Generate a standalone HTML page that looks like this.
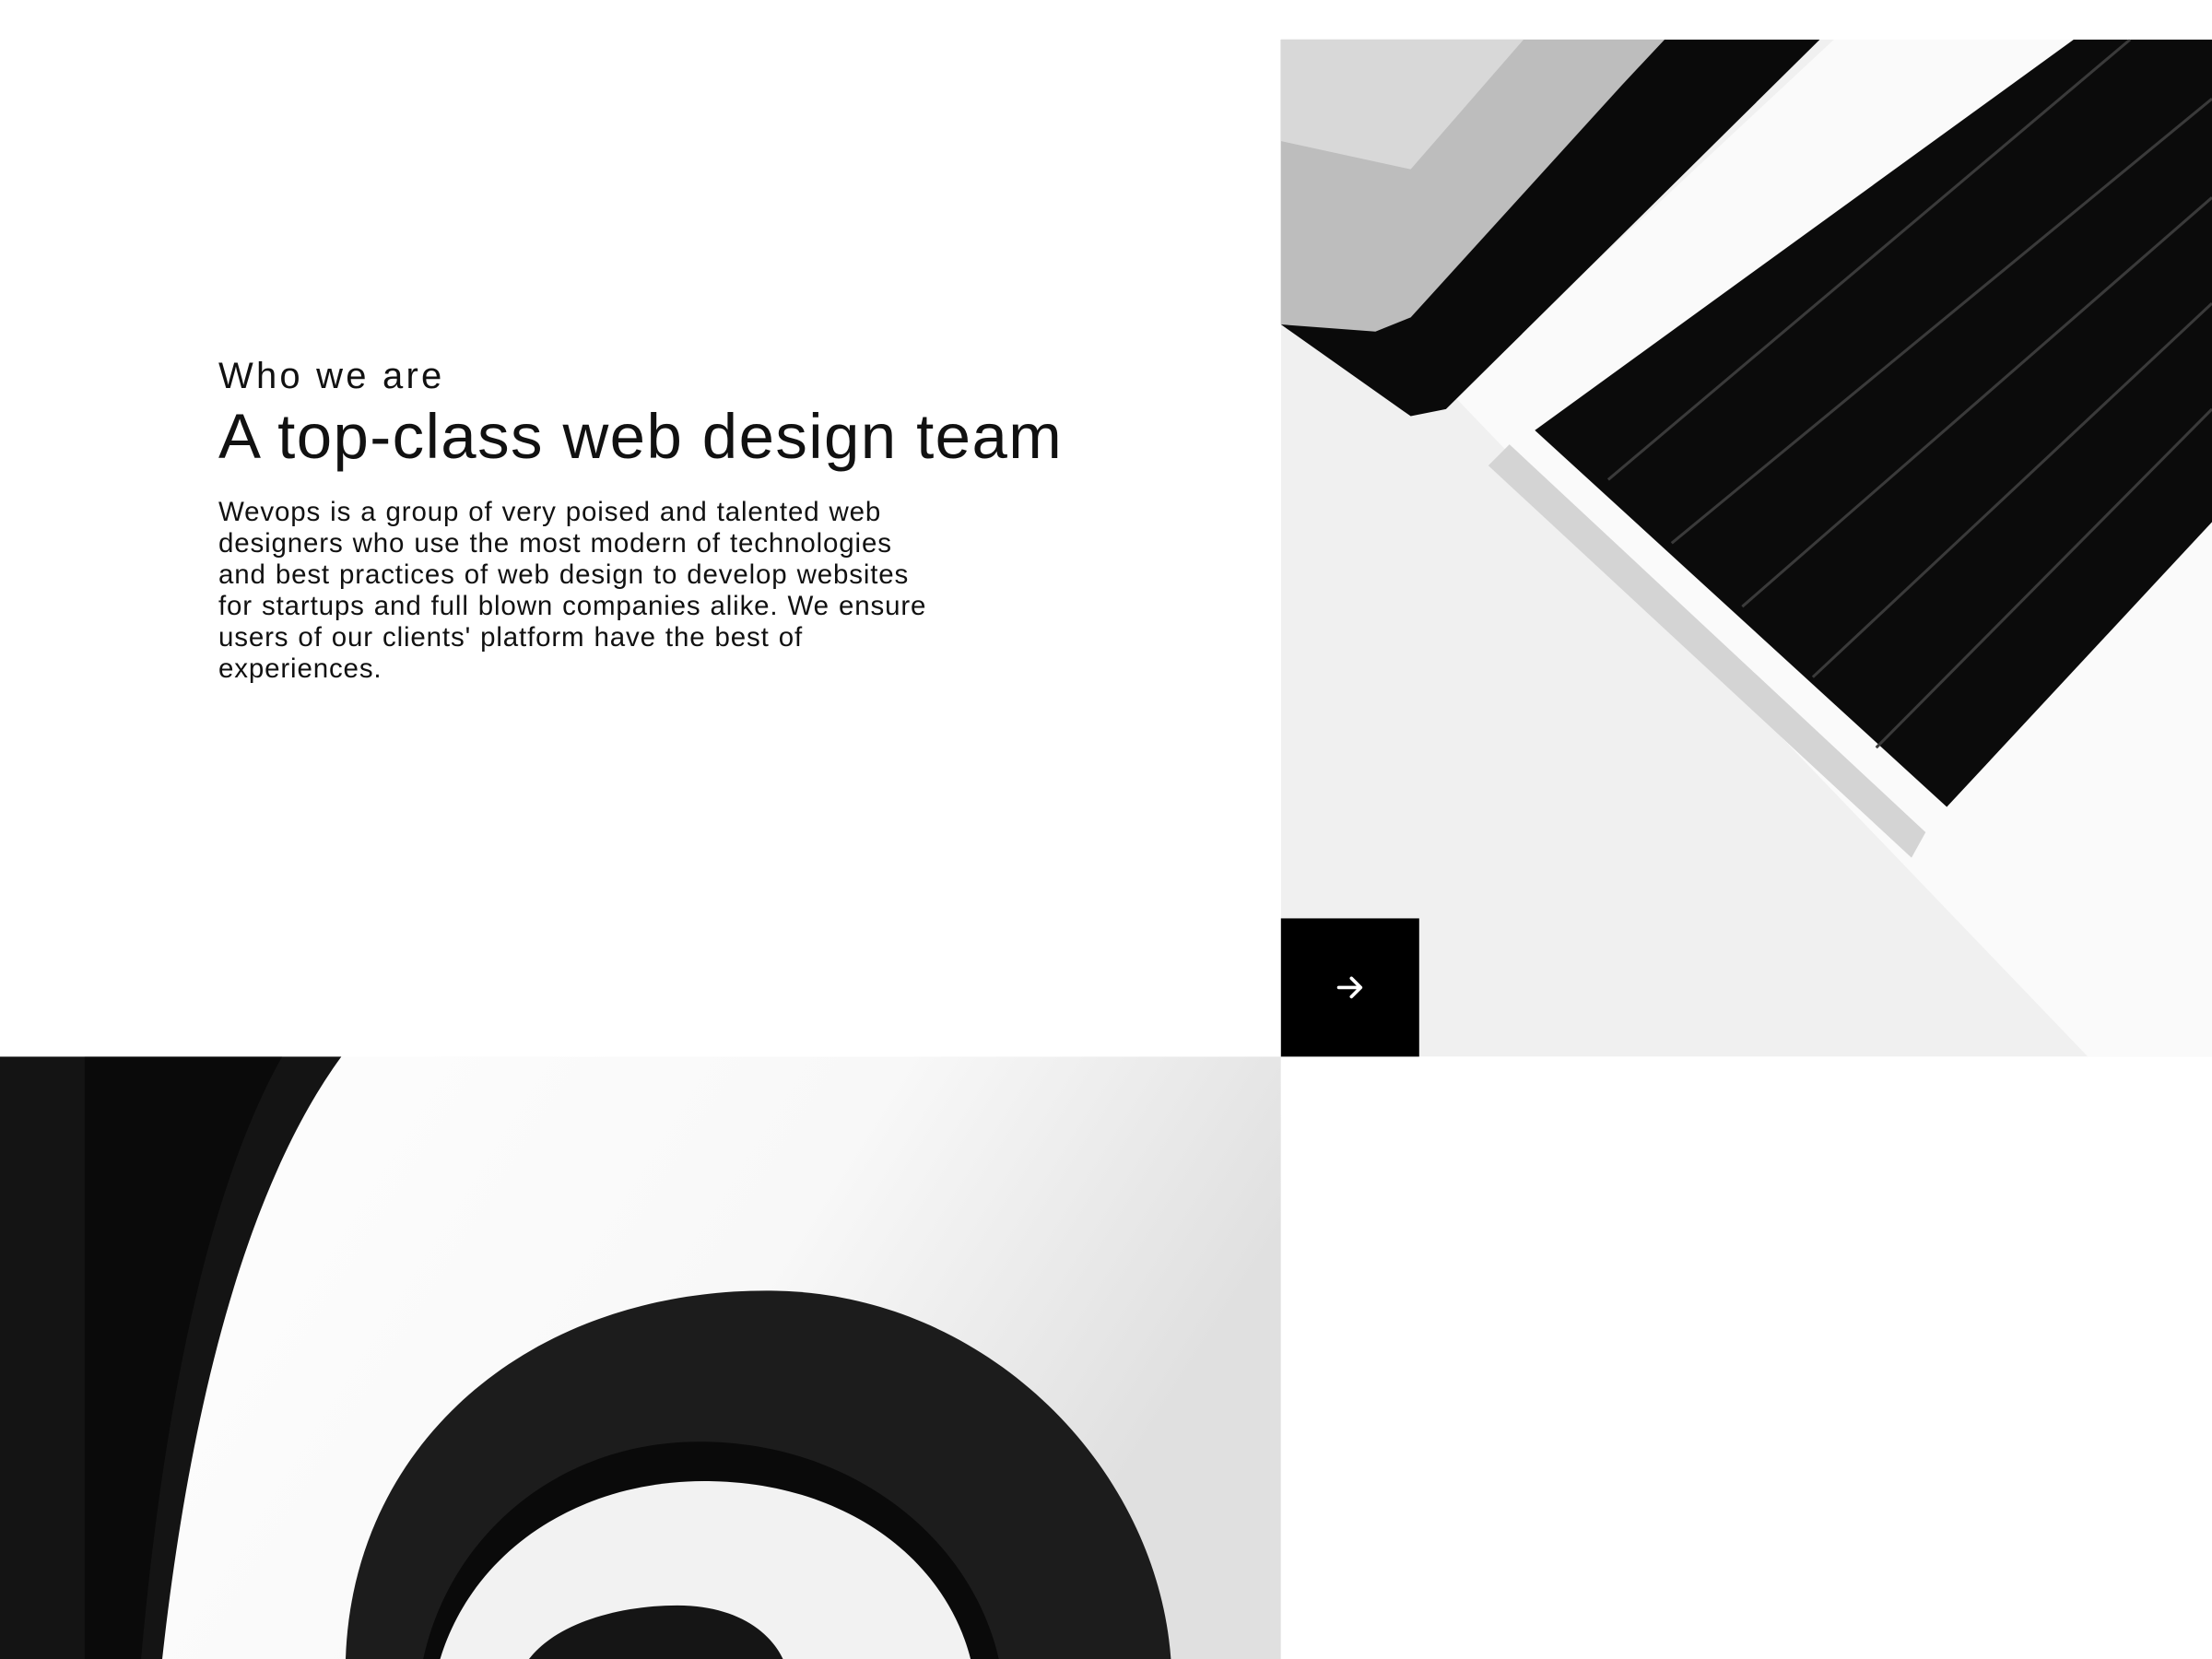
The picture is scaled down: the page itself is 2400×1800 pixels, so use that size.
<!DOCTYPE html>
<html><head><meta charset="utf-8"><style>
html,body{margin:0;padding:0;background:#fff;width:2400px;height:1800px;overflow:hidden;position:relative}
svg.bg{position:absolute;left:0;top:0}
.t{position:absolute;left:237px;font-family:"Liberation Sans",sans-serif;color:#111;white-space:nowrap}
#a{top:386px;font-size:40px;letter-spacing:3.2px}
#b{top:434px;font-size:69px;letter-spacing:1.4px}
#c{top:539px;font-size:29.5px;line-height:34px;letter-spacing:0.85px;word-spacing:1px}
</style></head><body>
<svg class="bg" width="2400" height="1800" viewBox="0 0 1568 1176" preserveAspectRatio="none">
<defs>
<linearGradient id="st" x1="0" y1="0" x2="1" y2="0.3"><stop offset="0" stop-color="#ffffff"/><stop offset="0.65" stop-color="#f8f8f8"/><stop offset="1" stop-color="#e0e0e0"/></linearGradient>
<clipPath id="c1"><rect x="908" y="28" width="660" height="721"/></clipPath>
<clipPath id="c2"><rect x="0" y="749" width="908" height="427"/></clipPath>
</defs>
<g clip-path="url(#c1)">
<rect x="908" y="28" width="660" height="721" fill="#f0f0f0"/>
<polygon points="1030,280 1300,28 1568,28 1568,749 1480,749" fill="#fafafa"/>
<polygon points="908,28 1290,28 1025,290 1000,295 908,230" fill="#0a0a0a"/>
<polygon points="908,28 1180,28 1150,60 1000,225 975,235 908,230" fill="#bdbdbd"/>
<polygon points="908,28 1080,28 1000,120 908,100" fill="#d8d8d8"/>
<polygon points="1088,305 1470,28 1568,28 1568,370 1380,572" fill="#0b0b0b"/>
<g stroke="#3a3a3a" stroke-width="2">
<line x1="1140" y1="340" x2="1510" y2="28"/><line x1="1185" y1="385" x2="1568" y2="70"/>
<line x1="1235" y1="430" x2="1568" y2="140"/><line x1="1285" y1="480" x2="1568" y2="215"/>
<line x1="1330" y1="530" x2="1568" y2="290"/>
</g>
<polygon points="1055,330 1070,315 1365,590 1355,608" fill="#d4d4d4"/>
</g>
<rect x="908" y="651" width="98" height="98" fill="#000"/>
<path d="M949 700 H964 M958 693.5 L964.5 700 L958 706.5" stroke="#fff" stroke-width="2.4" fill="none" stroke-linecap="round" stroke-linejoin="round"/>
<g clip-path="url(#c2)">
<rect x="0" y="749" width="908" height="427" fill="url(#st)"/>
<path d="M0 749 L242 749 C190 820 140 950 115 1176 L0 1176 Z" fill="#141414"/>
<path d="M60 749 L200 749 C160 820 120 950 100 1176 L60 1176 Z" fill="#0a0a0a"/>
<path d="M245 1176 C250 1020 380 912 550 915 C700 918 820 1040 830 1176 Z" fill="#1c1c1c"/>
<path d="M300 1176 C320 1085 400 1020 500 1022 C610 1024 690 1095 708 1176 Z" fill="#0a0a0a"/>
<path d="M312 1176 C335 1100 410 1048 505 1050 C600 1052 670 1105 688 1176 Z" fill="#f2f2f2"/>
<path d="M375 1176 C395 1150 440 1138 480 1138 C520 1138 545 1155 555 1176 Z" fill="#151515"/>
</g>
</svg>
<div class="t" id="a">Who we are</div>
<div class="t" id="b">A top-class web design team</div>
<div class="t" id="c">Wevops is a group of very poised and talented web<br>designers who use the most modern of technologies<br>and best practices of web design to develop websites<br>for startups and full blown companies alike. We ensure<br>users of our clients' platform have the best of<br>experiences.</div>
</body></html>
